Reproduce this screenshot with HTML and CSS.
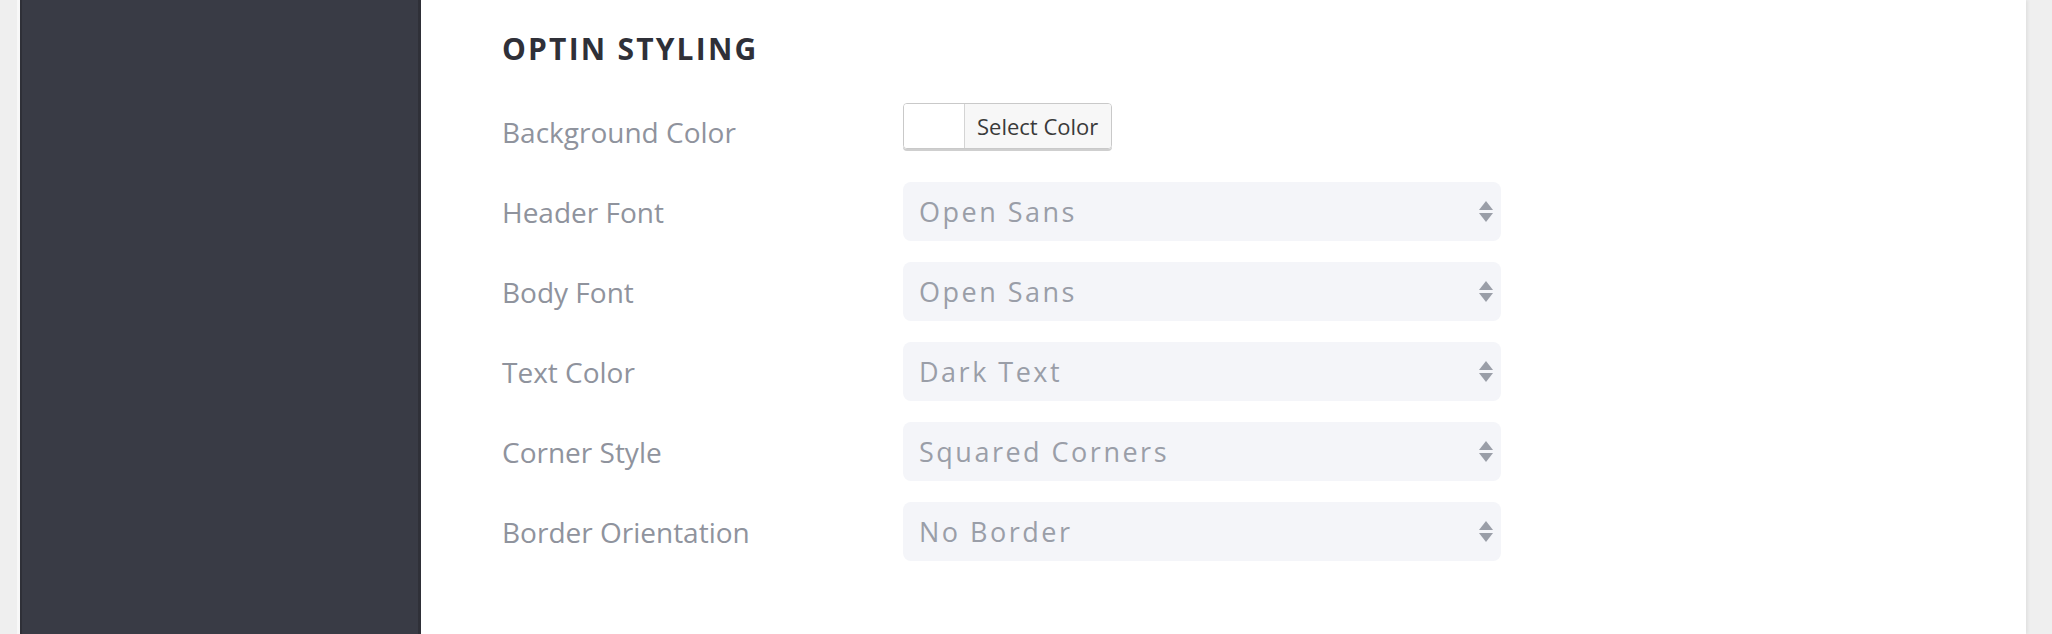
FILE: index.html
```html
<!DOCTYPE html>
<html lang="en">

<head>
    <meta charset="UTF-8">
    <meta name="viewport" content="width=device-width, initial-scale=1.0">
    <title>Optin Styling</title>
    <link rel="stylesheet" href="styles.css">
</head>

<body>
    <div class="page">
        <!-- Dark side panel -->
        <div class="sidebar"></div>

        <!-- Settings panel -->
        <div class="content">
            <h2 class="section-title">OPTIN STYLING</h2>

            <div class="field">
                <label class="field-label">Background Color</label>
                <div class="color-picker">
                    <span class="swatch"></span>
                    <span class="picker-text">Select Color</span>
                </div>
            </div>

            <div class="field">
                <label class="field-label">Header Font</label>
                <div class="select-box">
                    <span class="select-value">Open Sans</span>
                    <span class="arrows"><i class="up"></i><i class="down"></i></span>
                </div>
            </div>

            <div class="field">
                <label class="field-label">Body Font</label>
                <div class="select-box">
                    <span class="select-value">Open Sans</span>
                    <span class="arrows"><i class="up"></i><i class="down"></i></span>
                </div>
            </div>

            <div class="field">
                <label class="field-label">Text Color</label>
                <div class="select-box">
                    <span class="select-value">Dark Text</span>
                    <span class="arrows"><i class="up"></i><i class="down"></i></span>
                </div>
            </div>

            <div class="field">
                <label class="field-label">Corner Style</label>
                <div class="select-box">
                    <span class="select-value">Squared Corners</span>
                    <span class="arrows"><i class="up"></i><i class="down"></i></span>
                </div>
            </div>

            <div class="field">
                <label class="field-label">Border Orientation</label>
                <div class="select-box">
                    <span class="select-value">No Border</span>
                    <span class="arrows"><i class="up"></i><i class="down"></i></span>
                </div>
            </div>
        </div>
    </div>
</body>

</html>
```

FILE: styles.css
```css
body {
    font-family: 'Open Sans', sans-serif;
    margin: 0;
    padding: 0;
    background-color: #efefef;
}

.page {
    display: flex;
    height: 634px;
    padding-left: 17px;
    padding-right: 26px;
}

/* Dark panel on the left */
.sidebar {
    width: 398px;
    background-color: #393b45;
    border-left: 3px solid #f8f8f8;
    border-right: 3px solid #2f3038;
    box-shadow: inset 2px 0 0 #2f3038;
}

.content {
    flex: 1;
    background-color: #fff;
    padding: 26px 0 0 81px;
    box-shadow: 2px 0 3px rgba(0, 0, 0, 0.06);
}

.section-title {
    margin: 0 0 30px 0;
    font-size: 30px;
    font-weight: 700;
    letter-spacing: 2.2px;
    line-height: 46px;
    color: #2f3038;
}

.field {
    display: flex;
    align-items: center;
    height: 59px;
    margin-bottom: 21px;
}

.field-label {
    width: 401px;
    font-size: 28px;
    color: #8f939d;
}

/* Color picker button */
.color-picker {
    display: flex;
    align-self: flex-start;
    margin-top: 1px;
    height: 44px;
    border: 1px solid #c9c9c9;
    border-radius: 4px;
    box-shadow: 0 2px 0 #cfcfcf;
    overflow: hidden;
}

.swatch {
    width: 60px;
    background-color: #fff;
    border-right: 1px solid #d4d4d4;
}

.picker-text {
    display: flex;
    align-items: center;
    padding: 0 13px 0 12px;
    background-color: #f7f7f7;
    font-size: 22px;
    color: #3a3a3a;
}

/* Select boxes */
.select-box {
    display: flex;
    align-items: center;
    justify-content: space-between;
    width: 598px;
    height: 59px;
    box-sizing: border-box;
    padding: 0 8px 0 16px;
    background-color: #f4f5f9;
    border-radius: 8px;
}

.select-value {
    font-size: 27px;
    letter-spacing: 2.5px;
    color: #9a9ea8;
}

.arrows {
    display: flex;
    flex-direction: column;
    align-items: center;
    gap: 3px;
}

.arrows i {
    width: 0;
    height: 0;
    border-left: 7px solid transparent;
    border-right: 7px solid transparent;
}

.arrows .up {
    border-bottom: 9px solid #9a9ea8;
}

.arrows .down {
    border-top: 9px solid #9a9ea8;
}
```
